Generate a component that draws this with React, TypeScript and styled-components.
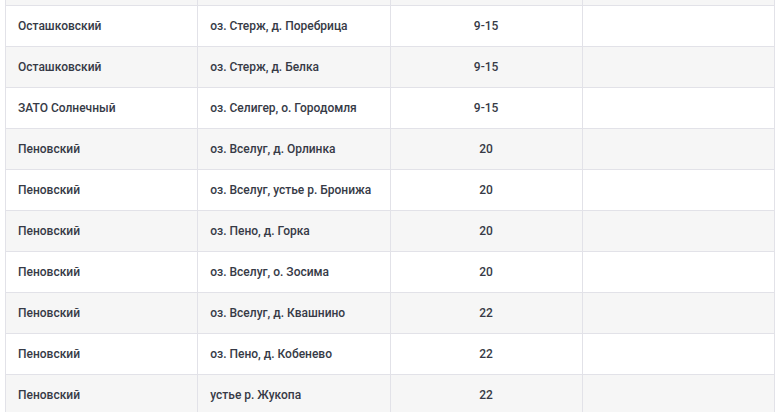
import styled, { createGlobalStyle } from 'styled-components';

const GlobalStyle = createGlobalStyle`
  html, body {
    margin: 0;
    padding: 0;
    background: #ffffff;
    overflow: hidden;
  }
`;

interface Row {
  district: string;
  place: string;
  depth: string;
  note?: string;
}

const ROWS: Row[] = [
  { district: 'Осташковский', place: 'оз. Стерж, д. Поребрица', depth: '9-15' },
  { district: 'Осташковский', place: 'оз. Стерж, д. Белка', depth: '9-15' },
  { district: 'ЗАТО Солнечный', place: 'оз. Селигер, о. Городомля', depth: '9-15' },
  { district: 'Пеновский', place: 'оз. Вселуг, д. Орлинка', depth: '20' },
  { district: 'Пеновский', place: 'оз. Вселуг, устье р. Бронижа', depth: '20' },
  { district: 'Пеновский', place: 'оз. Пено, д. Горка', depth: '20' },
  { district: 'Пеновский', place: 'оз. Вселуг, о. Зосима', depth: '20' },
  { district: 'Пеновский', place: 'оз. Вселуг, д. Квашнино', depth: '22' },
  { district: 'Пеновский', place: 'оз. Пено, д. Кобенево', depth: '22' },
  { district: 'Пеновский', place: 'устье р. Жукопа', depth: '22' },
];

const Page = styled.div`
  padding: 0 7px 0 5px;
`;

const Table = styled.table`
  width: 100%;
  border-collapse: collapse;
  table-layout: fixed;
  font-family: Roboto, 'Liberation Sans', Arial, sans-serif;
  font-size: 12px;
  font-weight: 500;
  color: #363a46;
`;

const Tr = styled.tr<{ $striped: boolean }>`
  height: 41px;
  background: ${({ $striped }) => ($striped ? '#f6f6f6' : '#ffffff')};
`;

/* tail of the row scrolled out above the viewport */
const CutRow = styled.tr`
  height: 5px;
  background: #f6f6f6;

  td {
    border-top: none;
  }
`;

const Td = styled.td<{ $center?: boolean }>`
  border: 1px solid #e2e2e8;
  padding: 0 12px;
  vertical-align: middle;
  text-align: ${({ $center }) => ($center ? 'center' : 'left')};
  white-space: nowrap;
  overflow: hidden;
`;

const CutTd = styled(Td)`
  padding: 0;
  height: 4px;
  line-height: 0;
`;

export default function App() {
  return (
    <>
      <GlobalStyle />
      <Page>
        <Table>
          <tbody>
            <CutRow>
              <CutTd />
              <CutTd />
              <CutTd />
              <CutTd />
            </CutRow>
            {ROWS.map((row, i) => (
              <Tr key={i} $striped={i % 2 === 1}>
                <Td>{row.district}</Td>
                <Td>{row.place}</Td>
                <Td $center>{row.depth}</Td>
                <Td>{row.note ?? ''}</Td>
              </Tr>
            ))}
          </tbody>
        </Table>
      </Page>
    </>
  );
}
